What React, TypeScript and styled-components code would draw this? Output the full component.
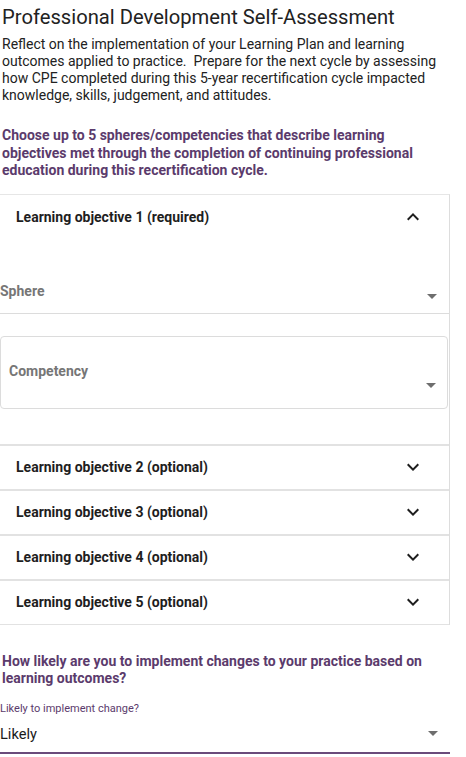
import * as React from 'react';
import styled, { createGlobalStyle } from 'styled-components';

const GlobalStyle = createGlobalStyle`
    body {
        margin: 0;
        background: #fff;
        font-family: Roboto, "Liberation Sans", Arial, sans-serif;
        color: #212121;
    }
`;

const Page = styled.div`
    width: 450px;
    padding: 4px 0 0 0;
`;
const Title = styled.h1`
    margin: 0 0 0 2px;
    font-size: 20.2px;
    font-weight: 400;
    line-height: 26px;
    color: #222;
`;
const Intro = styled.p`
    margin: 6px 0 0 2px;
    font-size: 14px;
    line-height: 17px;
    color: #222;
`;
const Prompt = styled.p<{ $top: number }>`
    margin: ${p => p.$top}px 0 0 2px;
    font-size: 14px;
    font-weight: 700;
    line-height: 17.5px;
    color: #5b3b6c;
`;

const Accordion = styled.div`
    margin-top: 14px;
    border-right: 1px solid #ddd;
    border-top: 1px solid #e6e6e6;
`;
const Panel = styled.div`
    background: #fff;
    & + & {
        border-top: 2px solid #e2e2e2;
    }
    &:last-child {
        border-bottom: 1px solid #e2e2e2;
    }
`;
const PanelHeader = styled.div<{ $open?: boolean }>`
    display: flex;
    align-items: center;
    justify-content: space-between;
    height: ${p => (p.$open ? 44 : 43)}px;
    padding: 0 24px 0 16px;
    font-size: 14px;
    font-weight: 700;
    color: #1e1e1e;
`;
const Chevron = styled.svg`
    width: 24px;
    height: 24px;
`;
const PanelBody = styled.div`
    padding: 31px 0 35px 0;
`;

const SelectLine = styled.div`
    display: flex;
    justify-content: space-between;
    height: 43px;
    border-bottom: 1px solid #dcdcdc;
`;
const SelectBox = styled.div`
    display: flex;
    justify-content: space-between;
    height: 71px;
    margin: 22px 1px 0 0;
    padding-left: 8px;
    border: 1px solid #dcdcdc;
    border-radius: 4px;
`;
const FieldLabel = styled.span<{ $top: number }>`
    padding-top: ${p => p.$top}px;
    font-size: 14px;
    font-weight: 700;
    line-height: 20px;
    color: #767676;
`;
const Caret = styled.span<{ $top: number; $right: number }>`
    margin-top: ${p => p.$top}px;
    margin-right: ${p => p.$right}px;
    width: 0;
    height: 0;
    border-left: 5px solid transparent;
    border-right: 5px solid transparent;
    border-top: 5px solid #6e6e6e;
`;

const SmallLabel = styled.div`
    margin-top: 14px;
    font-size: 11px;
    line-height: 14px;
    color: #5b3b6c;
`;
const ValueSelect = styled.div`
    display: flex;
    justify-content: space-between;
    align-items: center;
    height: 36px;
    border-bottom: 2px solid #6a4b7b;
    font-size: 14.6px;
    color: #1a1a1a;
`;

const ChevronIcon = ({ up }: { up?: boolean }) => (
    <Chevron viewBox="0 0 24 24">
        <path
            d={up ? 'M7.4 15.4 12 10.8l4.6 4.6L18 14l-6-6-6 6z' : 'M7.4 8.6 12 13.2l4.6-4.6L18 10l-6 6-6-6z'}
            fill="#1e1e1e"
        />
    </Chevron>
);

const optional = [2, 3, 4, 5];

const App: React.FC = () => (
    <Page>
        <GlobalStyle />
        <Title>Professional Development Self-Assessment</Title>
        <Intro>
            Reflect on the implementation of your Learning Plan and learning outcomes applied to practice.&nbsp; Prepare for the next cycle by assessing how CPE completed during this 5-year recertification cycle impacted knowledge, skills, judgement, and attitudes.
        </Intro>
        <Prompt $top={23}>
            Choose up to 5 spheres/competencies that describe learning objectives met through the completion of continuing professional education during this recertification cycle.
        </Prompt>
        <Accordion>
            <Panel>
                <PanelHeader $open>
                    <span>Learning objective 1 (required)</span>
                    <ChevronIcon up />
                </PanelHeader>
                <PanelBody>
                    <SelectLine>
                        <FieldLabel $top={11}>Sphere</FieldLabel>
                        <Caret $top={24} $right={12} />
                    </SelectLine>
                    <SelectBox>
                        <FieldLabel $top={24}>Competency</FieldLabel>
                        <Caret $top={46} $right={11} />
                    </SelectBox>
                </PanelBody>
            </Panel>
            {optional.map(n => (
                <Panel key={n}>
                    <PanelHeader>
                        <span>Learning objective {n} (optional)</span>
                        <ChevronIcon />
                    </PanelHeader>
                </Panel>
            ))}
        </Accordion>
        <Prompt $top={28}>
            How likely are you to implement changes to your practice based on learning outcomes?
        </Prompt>
        <SmallLabel>Likely to implement change?</SmallLabel>
        <ValueSelect>
            <span>Likely</span>
            <Caret $top={0} $right={12} />
        </ValueSelect>
    </Page>
);

export default App;
